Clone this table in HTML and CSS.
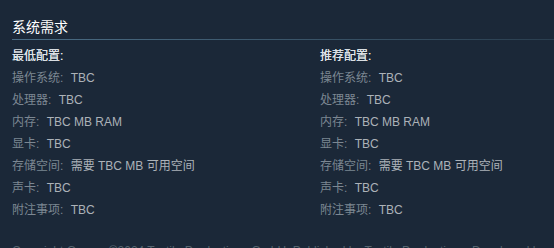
FILE: index.html
```html
<!DOCTYPE html>
<html lang="zh-CN">
<head>
<meta charset="utf-8">
<link rel="stylesheet" href="styles.css">
</head>
<body>
<div class="sysreq">
  <h2 class="sysreq-title">系统需求</h2>
  <div class="cols">
    <div class="col">
      <div class="col-head">最低配置:</div>
      <ul class="req-list">
        <li><span class="lbl">操作系统:</span> TBC</li>
        <li><span class="lbl">处理器:</span> TBC</li>
        <li><span class="lbl">内存:</span> TBC MB RAM</li>
        <li><span class="lbl">显卡:</span> TBC</li>
        <li><span class="lbl">存储空间:</span> 需要 TBC MB 可用空间</li>
        <li><span class="lbl">声卡:</span> TBC</li>
        <li><span class="lbl">附注事项:</span> TBC</li>
      </ul>
    </div>
    <div class="col">
      <div class="col-head">推荐配置:</div>
      <ul class="req-list">
        <li><span class="lbl">操作系统:</span> TBC</li>
        <li><span class="lbl">处理器:</span> TBC</li>
        <li><span class="lbl">内存:</span> TBC MB RAM</li>
        <li><span class="lbl">显卡:</span> TBC</li>
        <li><span class="lbl">存储空间:</span> 需要 TBC MB 可用空间</li>
        <li><span class="lbl">声卡:</span> TBC</li>
        <li><span class="lbl">附注事项:</span> TBC</li>
      </ul>
    </div>
  </div>
  <p class="legal">Copyright Games ©2024 Tactile Productions GmbH. Published by Tactile Productions. Developed by Tactile Productions.</p>
</div>
</body>
</html>
```

FILE: styles.css
```css
html, body {
  margin: 0;
  padding: 0;
  background: #1b2838;
  overflow: hidden;
}
body {
  width: 554px;
  height: 248px;
  font-family: "Liberation Sans", "Noto Sans CJK SC", sans-serif;
  font-size: 12px;
  color: #acb2b8;
}
.sysreq {
  padding: 17px 0 0 12px;
}
.sysreq-title {
  margin: 0;
  font-size: 14px;
  font-weight: normal;
  line-height: 20px;
  height: 20px;
  color: #ffffff;
  padding-bottom: 3px;
  background-image: linear-gradient(to right, #4b6d85, #2a3e4f);
  background-size: 100% 1px;
  background-position: left bottom;
  background-repeat: no-repeat;
}
.cols {
  display: flex;
  margin-top: 5px;
}
.col {
  flex: 0 0 296px;
  margin-right: 12px;
}
.col:last-child {
  flex: 1 1 auto;
  margin-right: 0;
}
.col-head {
  line-height: 22px;
  color: #dfe4e8;
  font-weight: normal;
  text-shadow: 0 0 0.4px #dfe4e8;
}
.req-list {
  list-style: none;
  margin: 0;
  padding: 0;
}
.req-list li {
  line-height: 22px;
  white-space: nowrap;
}
.lbl {
  color: #7c8792;
  margin-right: 4px;
}
.legal {
  margin: 22px 0 0;
  padding-right: 4px;
  line-height: 16px;
  color: #56646f;
}
```
